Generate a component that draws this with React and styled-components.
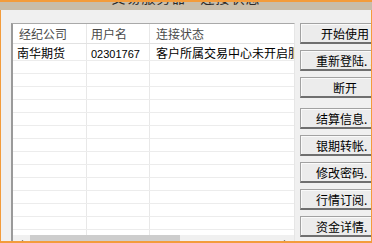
import React from 'react';
import styled, { createGlobalStyle } from 'styled-components';

const GlobalStyle = createGlobalStyle`
  html, body {
    margin: 0;
    padding: 0;
    background: #f0f0f0;
  }
`;

const Window = styled.div`
  width: 372px;
  height: 243px;
  box-sizing: border-box;
  border-bottom: 2px solid #f39c3c;
  overflow: hidden;
  background: #f0f0f0;
  font-family: "Noto Sans CJK SC", "Liberation Sans", sans-serif;
  display: flex;
  flex-direction: column;
`;

const TitleBar = styled.div`
  height: 10px;
  flex: none;
  box-sizing: border-box;
  border-top: 2px solid #f39c3c;
  background: #c8bdaa;
  display: flex;
  justify-content: center;
  align-items: flex-end;
  overflow: hidden;
`;

const TitleText = styled.span`
  font-size: 14px;
  line-height: 16px;
  color: #2a2a2a;
  margin-bottom: 5px;
  white-space: nowrap;
  letter-spacing: 1px;
`;

const Body = styled.div`
  flex: 1;
  display: flex;
  gap: 5px;
  padding: 13px 0 0 10px;
  border-left: 1px solid #f39c3c;
  border-right: 1px solid #f39c3c;
  overflow: hidden;
  min-height: 0;
`;

const List = styled.div`
  width: 284px;
  flex: none;
  box-sizing: border-box;
  border-top: 1px solid #a9a9a9;
  border-left: 2px solid #9a9a9a;
  border-right: 1px solid #e6e6e6;
  background: #fff;
  display: flex;
  flex-direction: column;
`;

const Row = styled.div`
  display: grid;
  grid-template-columns: 74px 63px 1fr;
  height: ${({ h }) => h}px;
  box-sizing: border-box;
  border-bottom: ${({ line }) => (line ? '1px solid #ececec' : 'none')};
  flex: none;
`;

const HeadRow = styled(Row)`
  border-bottom: 1px solid #e2e2e2;
`;

const Cell = styled.div`
  box-sizing: border-box;
  border-right: ${({ last }) => (last ? 'none' : '1px solid #e8e8e8')};
  padding-left: ${({ pad }) => pad}px;
  font-size: 12px;
  line-height: ${({ lh }) => lh}px;
  color: ${({ head }) => (head ? '#4a4a4a' : '#000')};
  white-space: nowrap;
  overflow: hidden;
`;

const Num = styled.span`
  font-family: "Liberation Sans", sans-serif;
  font-size: 11px;
`;

const ScrollBar = styled.div`
  height: 17px;
  flex: none;
  display: flex;
  background: #f0f0f0;
`;

const ScrollArrow = styled.div`
  width: 17px;
  flex: none;
  display: flex;
  align-items: center;
  justify-content: center;
`;

const ScrollThumb = styled.div`
  width: 150px;
  background: #cdcdcd;
`;

const ScrollTrack = styled.div`
  flex: 1;
`;

const Buttons = styled.div`
  display: flex;
  flex-direction: column;
  gap: 6px;
  flex: none;
`;

const Button = styled.div`
  width: 90px;
  height: 21px;
  box-sizing: border-box;
  border: 1px solid #a2a2a2;
  border-bottom: 2px solid #6f6f6f;
  background: #ececec;
  box-shadow: inset 1px 1px 0 #fafafa;
  display: flex;
  align-items: center;
  justify-content: center;
  font-size: 12px;
  color: #000;
  margin-top: ${({ gapTop }) => (gapTop ? '4px' : '0')};
  white-space: nowrap;
`;

/* wide dots that keep the label centred as if they were narrow */
const Dots = styled.span`
  letter-spacing: 3px;
  margin-right: -9px;
`;

const Chevron = ({ dir }) => (
  <svg width="7" height="7" viewBox="0 0 7 7">
    <path
      d={dir === 'left' ? 'M5 0.5 L2 3.5 L5 6.5' : 'M2 0.5 L5 3.5 L2 6.5'}
      fill="none"
      stroke="#606060"
      strokeWidth="1.4"
    />
  </svg>
);

const buttons = [
  { label: '开始使用' },
  { label: '重新登陆', more: true },
  { label: '断开' },
  { label: '结算信息', more: true, gapTop: true },
  { label: '银期转帐', more: true },
  { label: '修改密码', more: true },
  { label: '行情订阅', more: true },
  { label: '资金详情', more: true },
];

export default function App() {
  const emptyRows = Array.from({ length: 13 });
  return (
    <>
      <GlobalStyle />
      <Window>
        <TitleBar>
          <TitleText>交易服务器 - 连接状态</TitleText>
        </TitleBar>
        <Body>
          <List>
            <HeadRow h={20}>
              <Cell head pad={6} lh={19}>经纪公司</Cell>
              <Cell head pad={4} lh={19}>用户名</Cell>
              <Cell head last pad={6} lh={19}>连接状态</Cell>
            </HeadRow>
            <Row h={17} line>
              <Cell pad={4} lh={18}>南华期货</Cell>
              <Cell pad={4} lh={18}><Num>02301767</Num></Cell>
              <Cell last pad={6} lh={18}>客户所属交易中心未开启服务</Cell>
            </Row>
            {emptyRows.map((_, i) => (
              <Row key={i} h={13} line>
                <Cell />
                <Cell />
                <Cell last />
              </Row>
            ))}
            <Row h={5}>
              <Cell />
              <Cell />
              <Cell last />
            </Row>
            <ScrollBar>
              <ScrollArrow><Chevron dir="left" /></ScrollArrow>
              <ScrollThumb />
              <ScrollTrack />
              <ScrollArrow><Chevron dir="right" /></ScrollArrow>
            </ScrollBar>
          </List>
          <Buttons>
            {buttons.map((b) => (
              <Button key={b.label} gapTop={b.gapTop}>
                {b.label}
                {b.more && <Dots>...</Dots>}
              </Button>
            ))}
          </Buttons>
        </Body>
      </Window>
    </>
  );
}
